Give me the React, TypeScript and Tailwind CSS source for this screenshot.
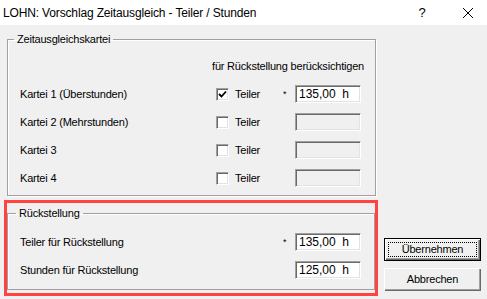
import React from 'react';

const font = "font-['Liberation_Sans',Arial,sans-serif]";

const Checkbox: React.FC<{ checked?: boolean }> = ({ checked }) => (
  <span className="w-[13px] h-[13px] shrink-0 bg-white border border-t-[#a0a0a0] border-l-[#a0a0a0] border-b-white border-r-white shadow-[inset_1px_1px_0_#696969,inset_-1px_-1px_0_#e3e3e3] flex items-center justify-center">
    {checked && (
      <svg width="9" height="9" viewBox="0 0 9 9">
        <polyline points="1,4 3.5,6.5 8,1.5" fill="none" stroke="#000" strokeWidth="1.8" />
      </svg>
    )}
  </span>
);

const Field: React.FC<{ value?: string; disabled?: boolean }> = ({ value, disabled }) => (
  <div
    className={`w-[66px] h-[18px] shrink-0 border border-t-[#a0a0a0] border-l-[#a0a0a0] border-b-white border-r-white shadow-[inset_1px_1px_0_#696969,inset_-1px_-1px_0_#e3e3e3] flex items-center pl-[3px] text-[12px] tracking-normal whitespace-pre ${
      disabled ? 'bg-[#f0f0f0]' : 'bg-white'
    }`}
  >
    {value}
  </div>
);

const KarteiRow: React.FC<{ label: string; checked?: boolean; value?: string }> = ({ label, checked, value }) => (
  <div className="h-[28px] flex items-center pl-[12px]">
    <span className="w-[196px]">{label}</span>
    <Checkbox checked={checked} />
    <span className="ml-[6px] w-[48px]">Teiler</span>
    <span className="w-[12px] self-start pt-[8px] text-[9px]">{value ? '*' : ''}</span>
    <Field value={value} disabled={!value} />
  </div>
);

const App: React.FC = () => {
  const karteien = [
    { label: 'Kartei 1 (Überstunden)', checked: true, value: '135,00  h' },
    { label: 'Kartei 2 (Mehrstunden)' },
    { label: 'Kartei 3' },
    { label: 'Kartei 4' },
  ];

  return (
    <div className={`w-[487px] h-[299px] bg-[#f0f0f0] overflow-hidden flex flex-col text-[11px] tracking-[-0.2px] text-black ${font}`}>
      {/* title bar */}
      <div className="h-[25px] shrink-0 bg-white flex items-center pl-[3px] text-[12px] tracking-[-0.15px]">
        <span className="flex-1">LOHN: Vorschlag Zeitausgleich - Teiler / Stunden</span>
        <span className="w-[20px] text-center text-[13px]">?</span>
        <svg className="ml-[31px] mr-[14px]" width="10" height="10" viewBox="0 0 10 10">
          <path d="M0 0L10 10M10 0L0 10" stroke="#000" strokeWidth="1" />
        </svg>
      </div>

      <div className="flex flex-1">
        <div className="pl-[4px] w-[378px] flex flex-col">
          <fieldset className="ml-[3px] mt-[8px] w-[369px] border border-[#a0a0a0] shadow-[inset_1px_1px_0_#fff,1px_1px_0_#fff] pb-[3px]">
            <legend className="ml-[6px] px-[3px] leading-[13px]">Zeitausgleichskartei</legend>
            <div className="mt-[13px] h-[14px] leading-[14px] text-right pr-[11px]">
              für Rückstellung berücksichtigen
            </div>
            <div className="mt-[7px]">
              {karteien.map((k) => (
                <KarteiRow key={k.label} label={k.label} checked={k.checked} value={k.value} />
              ))}
            </div>
          </fieldset>

          <div className="mt-[4px] w-[374px] h-[96px] border-[3px] border-[#ff4343]">
            <fieldset className="mt-[4px] w-[368px] h-[83px] border border-[#a0a0a0] shadow-[inset_1px_1px_0_#fff]">
              <legend className="ml-[8px] px-[3px] leading-[13px]">Rückstellung</legend>
              <div className="mt-[8px]">
                <div className="h-[28px] flex items-center pl-[12px]">
                  <span className="w-[263px]">Teiler für Rückstellung</span>
                  <span className="w-[12px] self-start pt-[8px] text-[9px]">*</span>
                  <Field value="135,00  h" />
                </div>
                <div className="h-[28px] flex items-center pl-[12px]">
                  <span className="w-[275px]">Stunden für Rückstellung</span>
                  <Field value="125,00  h" />
                </div>
              </div>
            </fieldset>
          </div>
        </div>

        <div className="ml-[6px] flex flex-col justify-end gap-[7px] pb-[8px]">
          <button className="w-[97px] h-[23px] bg-[#f0f0f0] border border-black shadow-[inset_1px_1px_0_#fff,inset_-1px_-1px_0_#696969,inset_-2px_-2px_0_#a0a0a0] p-[3px]">
            <span className="w-full h-full flex items-center justify-center border border-dotted border-black">
              Übernehmen
            </span>
          </button>
          <button className="w-[97px] h-[23px] bg-[#f0f0f0] shadow-[inset_1px_1px_0_#fff,inset_-1px_-1px_0_#696969,inset_-2px_-2px_0_#a0a0a0] flex items-center justify-center">
            Abbrechen
          </button>
        </div>
      </div>
    </div>
  );
};

export default App;
